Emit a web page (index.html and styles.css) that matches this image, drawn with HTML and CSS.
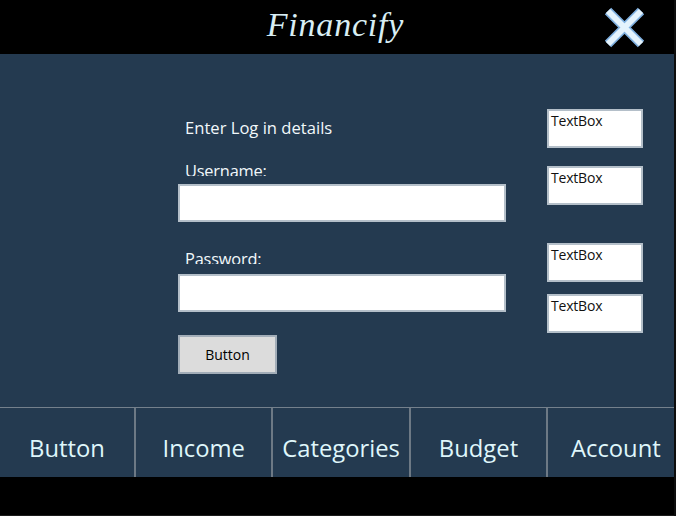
FILE: index.html
```html
<!DOCTYPE html>
<html lang="en">
<head>
<meta charset="utf-8">
<title>Financify</title>
<link rel="stylesheet" href="styles.css">
</head>
<body>
<div class="app">
  <header class="topbar">
    <h1 class="brand">Financify</h1>
    <button class="close" aria-label="Close">
      <svg viewBox="0 0 44 44" width="44" height="44">
        <path class="close-glow" d="M6 6 L39 39 M39 6 L6 39"/>
        <path class="close-core" d="M6 6 L39 39 M39 6 L6 39"/>
      </svg>
    </button>
  </header>
  <main class="content">
    <section class="login">
      <p class="heading">Enter Log in details</p>
      <div class="label label-user"><span>Username:</span></div>
      <div class="field field-user"></div>
      <div class="label label-pass"><span>Password:</span></div>
      <div class="field field-pass"></div>
      <div class="submit">Button</div>
    </section>
    <aside class="boxes">
      <div class="textbox box-a">TextBox</div>
      <div class="textbox box-b">TextBox</div>
      <div class="textbox box-c">TextBox</div>
      <div class="textbox box-d">TextBox</div>
    </aside>
  </main>
  <nav class="tabs">
    <div class="tab">Button</div>
    <div class="tab">Income</div>
    <div class="tab">Categories</div>
    <div class="tab">Budget</div>
    <div class="tab">Account</div>
  </nav>
  <div class="bottom"></div>
</div>
</body>
</html>
```

FILE: styles.css
```css
html, body {
  margin: 0;
  padding: 0;
  background: #000;
}
body {
  width: 676px;
  height: 516px;
  overflow: hidden;
  font-family: "Open Sans", "Noto Sans", sans-serif;
}
.app {
  width: 674px;
  height: 516px;
  display: flex;
  flex-direction: column;
  background: #243a50;
  border-right: 2px solid #0d0d0d;
}
.topbar {
  height: 54px;
  flex: none;
  background: #000;
  display: flex;
  align-items: center;
  justify-content: center;
  position: relative;
}
.brand {
  margin: 0;
  font-family: "Liberation Serif", serif;
  font-style: italic;
  font-weight: 400;
  font-size: 34px;
  letter-spacing: 0.8px;
  color: #d8eef4;
  line-height: 50px;
  padding: 0 3px 4px 0;
}
.close {
  position: absolute;
  left: 602px;
  top: 5px;
  width: 44px;
  height: 44px;
  padding: 0;
  border: 0;
  background: none;
}
.close svg {
  display: block;
}
.close-glow {
  fill: none;
  stroke: #7fb0e0;
  stroke-width: 9;
}
.close-core {
  fill: none;
  stroke: #e4f3fd;
  stroke-width: 6;
}
.content {
  height: 353px;
  flex: none;
  display: flex;
  padding-left: 178px;
  box-sizing: border-box;
}
.login {
  width: 328px;
  display: flex;
  flex-direction: column;
  align-items: flex-start;
}
.heading {
  margin: 62px 0 0 7px;
  height: 24px;
  font-size: 16.6px;
  line-height: 24px;
  color: #f2f8fb;
  white-space: nowrap;
}
.label {
  margin-left: 7px;
  overflow: hidden;
  font-size: 16.4px;
  letter-spacing: -0.2px;
  color: #f2f8fb;
  white-space: nowrap;
}
.label span {
  display: block;
  line-height: 18px;
}
.label-user {
  margin-top: 22px;
  height: 14px;
}
.label-pass {
  margin-top: 28px;
  height: 14px;
}
.field {
  width: 328px;
  height: 38px;
  box-sizing: border-box;
  background: #fff;
  border: 2px solid #b4bfc9;
}
.field-user {
  margin-top: 8px;
}
.field-pass {
  margin-top: 10px;
}
.submit {
  margin-top: 23px;
  width: 99px;
  height: 39px;
  box-sizing: border-box;
  background: #dcdcdc;
  border: 2px solid #a2adb8;
  color: #000;
  font-size: 14px;
  display: flex;
  align-items: center;
  justify-content: center;
}
.boxes {
  margin-left: 41px;
  display: flex;
  flex-direction: column;
  align-items: flex-start;
  padding-top: 55px;
}
.textbox {
  width: 96px;
  height: 39px;
  box-sizing: border-box;
  background: #fff;
  border: 2px solid #b4bfc9;
  color: #111;
  font-size: 14px;
  letter-spacing: -0.2px;
  line-height: 18px;
  padding: 1px 0 0 2px;
}
.box-b {
  margin-top: 18px;
}
.box-c {
  margin-top: 38px;
}
.box-d {
  margin-top: 12px;
}
.tabs {
  height: 70px;
  flex: none;
  display: flex;
  border-top: 1px solid #74808c;
  box-sizing: border-box;
}
.tab {
  flex: none;
  width: 137.4px;
  display: flex;
  align-items: center;
  justify-content: center;
  padding-top: 10px;
  box-sizing: border-box;
  font-size: 23.8px;
  color: #dff6fb;
  border-left: 2px solid #6d7985;
}
.tab:first-child {
  width: 134px;
  border-left: 0;
}
.bottom {
  flex: 1;
  background: #000;
  border-bottom: 1px solid #1c1c1c;
}
```
